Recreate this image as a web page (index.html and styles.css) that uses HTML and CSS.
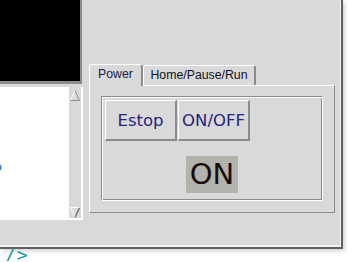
FILE: index.html
```html
<!DOCTYPE html>
<html>
<head>
    <title>Power</title>
    <link rel="stylesheet" href="styles.css">
</head>
<body>
    <div class="window">
        <div class="left">
            <div class="canvas"></div>
            <div class="textframe">
                <div class="text">
                    <div class="line">o</div>
                </div>
                <div class="scrollbar">
                    <svg class="arrow" width="10" height="11" viewBox="0 0 10 11">
                        <polygon points="5,0 10,11 0,11" fill="#d9d9d9"/>
                        <path d="M0.5 10.5 L5 0.5" stroke="#ffffff" fill="none"/>
                        <path d="M5 0.5 L9.5 10.5 H0.5" stroke="#8a8a8a" fill="none"/>
                    </svg>
                    <svg class="arrow" width="10" height="11" viewBox="0 0 10 11">
                        <polygon points="0,0 10,0 5,11" fill="#d9d9d9"/>
                        <path d="M0.5 0.5 H9.5 M0.5 0.5 L5 10.5" stroke="#ffffff" fill="none"/>
                        <path d="M9.5 0.8 L5 10.5" stroke="#7a7a7a" stroke-width="1.5" fill="none"/>
                    </svg>
                </div>
            </div>
        </div>

        <div class="notebook">
            <div class="tabs">
                <div class="tab selected">Power</div>
                <div class="tab">Home/Pause/Run</div>
            </div>
            <div class="pane">
                <div class="group">
                    <div class="buttons">
                        <button type="button">Estop</button>
                        <button type="button">ON/OFF</button>
                    </div>
                    <div class="state">ON</div>
                </div>
            </div>
        </div>
    </div>
    <div class="source">/&gt;</div>
</body>
</html>
```

FILE: styles.css
```css
/* Tk style power panel */
body {
    margin: 0;
    background-color: #ffffff;
    overflow: hidden;
}

.window {
    display: flex;
    align-items: flex-start;
    width: 343px;
    height: 249px;
    box-sizing: border-box;
    background-color: #d9d9d9;
    border-right: 2px solid #5f5f5f;
    border-bottom: 2px solid #5f5f5f;
    box-shadow: inset -1px -2px 0 #f2f2f2, 2px 2px 4px rgba(0, 0, 0, 0.18);
}

/* left column: canvas and text widget */
.left {
    display: flex;
    flex-direction: column;
    width: 83px;
}

.canvas {
    width: 80px;
    height: 81px;
    background-color: #000000;
    border-right: 2px solid #8c8c8c;
    border-bottom: 3px solid #8c8c8c;
    margin-bottom: 3px;
}

.textframe {
    display: flex;
    width: 83px;
    height: 133px;
    box-sizing: border-box;
    border-right: 2px solid #ffffff;
    border-bottom: 2px solid #ffffff;
}

.text {
    width: 70px;
    background-color: #ffffff;
    overflow: hidden;
}

.line {
    margin-top: 72px;
    text-indent: -6px;
    font-family: 'DejaVu Sans', sans-serif;
    font-size: 13px;
    color: #2a5bd7;
}

.scrollbar {
    width: 11px;
    display: flex;
    flex-direction: column;
    justify-content: space-between;
    padding: 3px 0 0 1px;
}

.arrow {
    display: block;
}

/* notebook */
.notebook {
    width: 246px;
    margin-left: 6px;
    margin-top: 64px;
}

.tabs {
    display: flex;
    align-items: flex-end;
    height: 21px;
}

.tab {
    position: relative;
    width: 113px;
    height: 20px;
    box-sizing: border-box;
    padding-top: 2px;
    border-top: 1px solid #ffffff;
    border-left: 1px solid #ffffff;
    border-right: 2px solid #8a8a8a;
    border-radius: 3px 3px 0 0;
    background-color: #d9d9d9;
    font-family: 'Liberation Sans', Arial, sans-serif;
    font-size: 12.3px;
    line-height: 14px;
    color: #12121e;
    text-align: center;
}

.tab.selected {
    width: 54px;
    height: 22px;
    margin-bottom: -1px;
    z-index: 1;
    color: #161a44;
}

.pane {
    height: 128px;
    box-sizing: border-box;
    padding: 10px 0 0 11px;
    border-top: 1px solid #ffffff;
    border-left: 1px solid #ffffff;
    border-right: 1px solid #8a8a8a;
    border-bottom: 1px solid #8a8a8a;
}

.group {
    width: 222px;
    height: 105px;
    box-sizing: border-box;
    padding: 3px 0 0 3px;
    border: 1px solid;
    border-color: #8a8a8a #ffffff #ffffff #8a8a8a;
    box-shadow: inset 1px 1px 0 #ffffff, inset -1px -1px 0 #8a8a8a;
}

.buttons {
    display: flex;
    gap: 1px;
}

button {
    width: 72px;
    height: 41px;
    padding: 0;
    background-color: #d9d9d9;
    border-style: solid;
    border-width: 1px 2px 2px 1px;
    border-color: #ffffff #8a8a8a #8a8a8a #ffffff;
    font-family: 'DejaVu Sans', sans-serif;
    font-size: 16.5px;
    color: #24247c;
}

.state {
    width: 52px;
    height: 37px;
    margin: 15px 0 0 81px;
    background-color: #b1b3ad;
    font-family: 'DejaVu Sans', sans-serif;
    font-size: 29px;
    line-height: 37px;
    color: #1c0b0b;
    text-align: center;
}

.source {
    padding-left: 5px;
    font-family: 'DejaVu Sans Mono', monospace;
    font-size: 18px;
    line-height: 12px;
    letter-spacing: 1px;
    color: #19999e;
}
```
